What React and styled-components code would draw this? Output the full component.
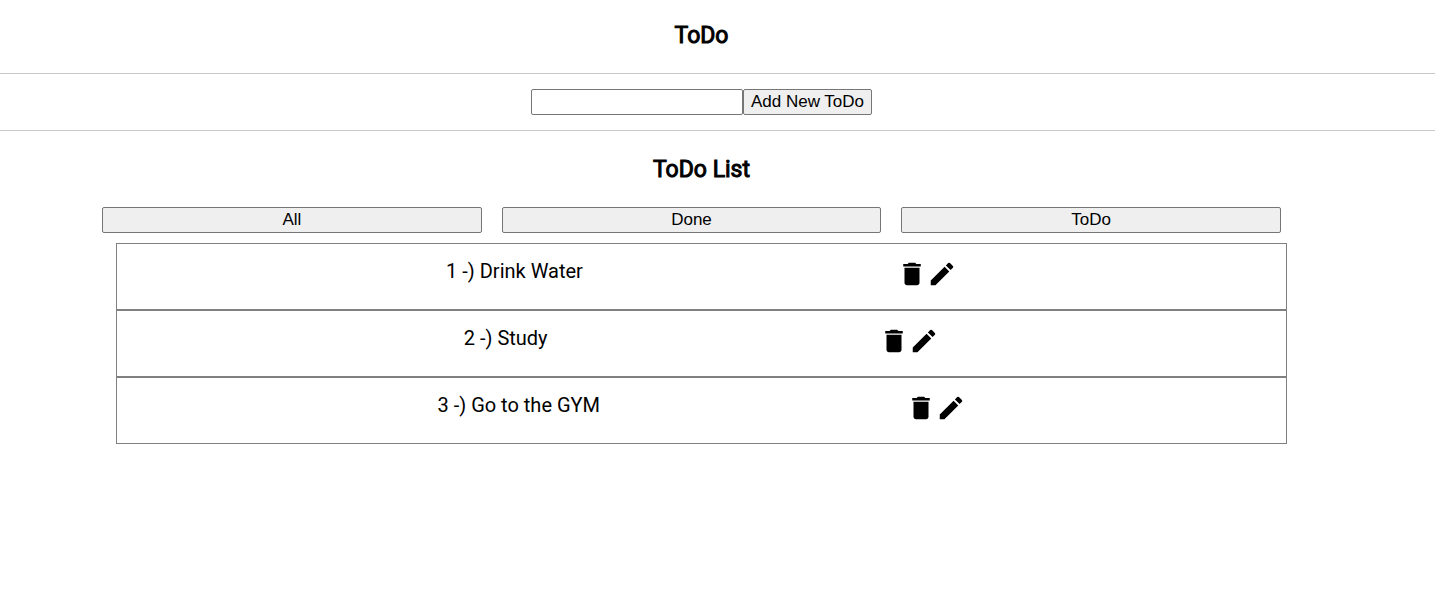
import React, { useState } from 'react';
import styled, { createGlobalStyle } from 'styled-components';
import { MdDelete, MdEdit } from 'react-icons/md';

const GlobalStyle = createGlobalStyle`
  *, *::before, *::after {
    box-sizing: border-box;
  }
  body {
    margin: 0;
    background: #fff;
    color: #000;
    font-family: Roboto, sans-serif;
    font-size: 20px;
    line-height: 24px;
  }
`;

const Section = styled.section`
  padding: ${({ $pad }) => $pad} 32px ${({ $pad }) => $pad} 0;
  border-bottom: ${({ $ruled }) => ($ruled ? '1px solid #c8c8c8' : 'none')};
`;

const Title = styled.h2`
  margin: 0;
  padding: ${({ $space }) => $space};
  font-size: 23px;
  line-height: 28px;
  font-weight: 400;
  -webkit-text-stroke: 1px #000;
  text-align: center;
`;

const Form = styled.form`
  display: flex;
  justify-content: center;
`;

const TextInput = styled.input`
  width: 212px;
  height: 26px;
  padding: 1px 3px;
  border: 1px solid #767676;
  border-radius: 2px;
  background: #fff;
  font: 17px/20px "Liberation Sans", Arial, sans-serif;
`;

const Button = styled.button`
  height: 26px;
  padding: 0 7px;
  border: 1px solid #767676;
  border-radius: 2px;
  background: #efefef;
  color: #000;
  font: 17px/20px "Liberation Sans", Arial, sans-serif;
  text-align: center;
`;

const ListArea = styled.div`
  max-width: 1199px;
  margin: 0 auto;
`;

const Filters = styled.div`
  display: grid;
  grid-template-columns: repeat(3, 1fr);
  gap: 20px;
  padding-right: 20px;
  margin-bottom: 10px;
`;

const List = styled.ul`
  margin: 0;
  padding: 0 14px;
  list-style: none;
`;

const Row = styled.li`
  display: flex;
  justify-content: space-evenly;
  align-items: flex-start;
  min-height: 67px;
  padding: 15px;
  border: 1px solid #808080;
`;

const Actions = styled.div`
  display: flex;
`;

const IconButton = styled.button`
  display: flex;
  padding: 0;
  border: 0;
  background: none;
  color: #000;
  font-size: 30px;
  cursor: pointer;
`;

const initialTodos = [
  { id: 1, text: 'Drink Water', done: false },
  { id: 2, text: 'Study', done: false },
  { id: 3, text: 'Go to the GYM', done: false },
];

const filters = ['All', 'Done', 'ToDo'];

export default function App() {
  const [todos, setTodos] = useState(initialTodos);
  const [draft, setDraft] = useState('');
  const [filter, setFilter] = useState('All');
  const [editing, setEditing] = useState(null);

  const submit = (event) => {
    event.preventDefault();
    const text = draft.trim();
    if (!text) return;
    if (editing !== null) {
      setTodos(todos.map((t) => (t.id === editing ? { ...t, text } : t)));
    } else {
      const id = Math.max(0, ...todos.map((t) => t.id)) + 1;
      setTodos([...todos, { id, text, done: false }]);
    }
    setEditing(null);
    setDraft('');
  };

  const visible = todos.filter(
    (t) => filter === 'All' || (filter === 'Done') === t.done
  );

  return (
    <>
      <GlobalStyle />
      <main>
        <Section $pad="0" $ruled>
          <Title as="h1" $space="22px 0 23px">ToDo</Title>
        </Section>
        <Section $pad="15px" $ruled>
          <Form onSubmit={submit}>
            <TextInput
              type="text"
              aria-label="New ToDo"
              value={draft}
              onChange={(e) => setDraft(e.target.value)}
            />
            <Button type="submit">Add New ToDo</Button>
          </Form>
        </Section>
        <Section $pad="0">
          <Title $space="25px 0 23px">ToDo List</Title>
          <ListArea>
            <Filters>
              {filters.map((name) => (
                <Button key={name} type="button" onClick={() => setFilter(name)}>
                  {name}
                </Button>
              ))}
            </Filters>
            <List>
              {visible.map((todo) => (
                <Row key={todo.id}>
                  <span>{todo.id} -) {todo.text}</span>
                  <Actions>
                    <IconButton
                      type="button"
                      aria-label="Delete"
                      onClick={() => setTodos(todos.filter((t) => t.id !== todo.id))}
                    >
                      <MdDelete />
                    </IconButton>
                    <IconButton
                      type="button"
                      aria-label="Edit"
                      onClick={() => {
                        setEditing(todo.id);
                        setDraft(todo.text);
                      }}
                    >
                      <MdEdit />
                    </IconButton>
                  </Actions>
                </Row>
              ))}
            </List>
          </ListArea>
        </Section>
      </main>
    </>
  );
}
